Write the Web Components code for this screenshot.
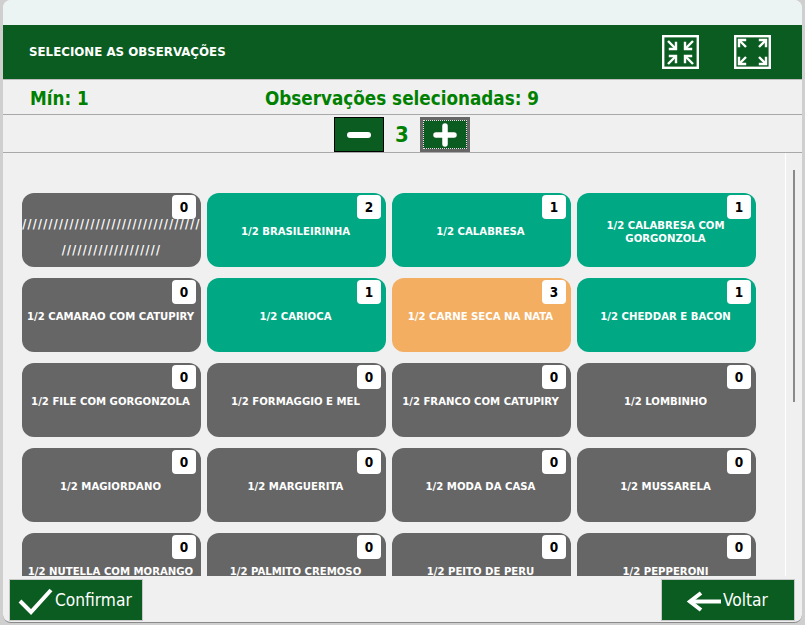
<!DOCTYPE html>
<html lang="pt"><head><meta charset="utf-8"><title>Observações</title>
<style>
html,body{margin:0;height:625px;overflow:hidden;background:#cfcfcf;font-family:"DejaVu Sans",sans-serif;font-stretch:condensed}
</style></head><body>
<obs-window>
  <obs-header slot="header" title-text="SELECIONE AS OBSERVAÇÕES"></obs-header>
  <obs-status slot="status" min="1" selected="9"></obs-status>
  <obs-stepper slot="stepper" value="3"></obs-stepper>
  <obs-scroll slot="body">
    <obs-card count="0" state="off"><span class="slashes"></span></obs-card>
    <obs-card count="2" state="on">1/2 BRASILEIRINHA</obs-card>
    <obs-card count="1" state="on">1/2 CALABRESA</obs-card>
    <obs-card count="1" state="on">1/2 CALABRESA COM GORGONZOLA</obs-card>
    <obs-card count="0" state="off">1/2 CAMARAO COM CATUPIRY</obs-card>
    <obs-card count="1" state="on">1/2 CARIOCA</obs-card>
    <obs-card count="3" state="max">1/2 CARNE SECA NA NATA</obs-card>
    <obs-card count="1" state="on">1/2 CHEDDAR E BACON</obs-card>
    <obs-card count="0" state="off">1/2 FILE COM GORGONZOLA</obs-card>
    <obs-card count="0" state="off">1/2 FORMAGGIO E MEL</obs-card>
    <obs-card count="0" state="off">1/2 FRANCO COM CATUPIRY</obs-card>
    <obs-card count="0" state="off">1/2 LOMBINHO</obs-card>
    <obs-card count="0" state="off">1/2 MAGIORDANO</obs-card>
    <obs-card count="0" state="off">1/2 MARGUERITA</obs-card>
    <obs-card count="0" state="off">1/2 MODA DA CASA</obs-card>
    <obs-card count="0" state="off">1/2 MUSSARELA</obs-card>
    <obs-card count="0" state="off">1/2 NUTELLA COM MORANGO</obs-card>
    <obs-card count="0" state="off">1/2 PALMITO CREMOSO</obs-card>
    <obs-card count="0" state="off">1/2 PEITO DE PERU</obs-card>
    <obs-card count="0" state="off">1/2 PEPPERONI</obs-card>
  </obs-scroll>
  <obs-action slot="left" kind="ok">Confirmar</obs-action>
  <obs-action slot="right" kind="back">Voltar</obs-action>
</obs-window>
<script>
const def=(name,css,html,init)=>customElements.define(name,class extends HTMLElement{
  connectedCallback(){
    if(this.shadowRoot)return;
    const r=this.attachShadow({mode:'open'});
    r.innerHTML='<style>'+css+'</style>'+(typeof html==='function'?html(this):html);
    if(init)init(this,r);
  }
});
const fontStack='"DejaVu Sans",sans-serif';
def('obs-window',`
:host{display:flex;flex-direction:column;box-sizing:border-box;height:623px;margin:0 3px 0 3px;background:#f0f0f0;border-radius:8px;border-bottom:1px solid #8a8a8a;overflow:hidden;font-family:${fontStack};font-stretch:condensed}
.cap{height:25px;flex:none;background:#ecf4f3}
.foot{flex:1;display:flex;justify-content:space-between;align-items:flex-start;padding:3px 7px 0 6px}
`,`<div class="cap"></div><slot name="header"></slot><slot name="status"></slot><slot name="stepper"></slot><slot name="body"></slot><div class="foot"><slot name="left"></slot><slot name="right"></slot></div>`);

const arrow=(x1,y1,x2,y2,hx,hy)=>`<path d="M${x1} ${y1}L${x2} ${y2}"/><path d="M${x2+hx*6} ${y2}H${x2}V${y2+hy*6}" stroke-linecap="square"/>`;
def('obs-header',`
:host{display:flex;align-items:center;height:54px;flex:none;background:#0a5c20;color:#fff;border-bottom:1px solid #bdbdbd;box-sizing:content-box}
.t{flex:1;padding:0 0 2px 26px;font-weight:700;font-size:13.15px}
.btns{display:flex;gap:35px;padding-right:31px}
svg{display:block;width:37px;height:34px}
`,h=>`<div class="t">${h.getAttribute('title-text')}</div><div class="btns">
<svg viewBox="0 0 37 34" fill="none" stroke="#fff" stroke-width="2.4"><rect x="1.2" y="1.2" width="34.6" height="31.6"/>
<g>${arrow(6,6,14,14,-1,-1)}${arrow(31,6,23,14,1,-1)}${arrow(6,29,14,21,-1,1)}${arrow(31,29,23,21,1,1)}</g></svg>
<svg viewBox="0 0 37 34" fill="none" stroke="#fff" stroke-width="2.4"><rect x="1.2" y="1.2" width="34.6" height="31.6"/>
<g>${arrow(12,12,5,5,1,1)}${arrow(25,12,32,5,-1,1)}${arrow(12,22,5,29,1,-1)}${arrow(25,22,32,29,-1,-1)}</g></svg>
</div>`);

def('obs-status',`
:host{display:flex;align-items:center;box-sizing:border-box;height:35px;padding-top:2px;flex:none;color:#008000;font-weight:700;font-size:18.7px;border-bottom:1px solid #a8a8a8}
.a{width:235px;padding-left:27px;flex:none;box-sizing:content-box}
`,h=>`<div class="a">Mín: ${h.getAttribute('min')}</div><div>Observações selecionadas: ${h.getAttribute('selected')}</div>`);

def('obs-stepper',`
:host{display:flex;align-items:flex-end;justify-content:center;height:37px;flex:none;border-bottom:1px solid #a8a8a8;padding-right:1px;box-sizing:content-box}
.v{width:36px;text-align:center;color:#008000;font-weight:700;font-size:22px;align-self:center;padding-top:2px}
.b{box-sizing:border-box;width:50px;height:35px;background:#0a5c20;border:1px solid #000;display:flex;align-items:center;justify-content:center;position:relative}
.b.f{border:3px solid #666}
.b.f::after{content:"";position:absolute;inset:0;border:1px dotted #fbd8f0}
svg{width:24px;height:24px;display:block}
`,h=>`<div class="b"><svg viewBox="0 0 24 24"><path d="M3 12H21" stroke="#fff" stroke-width="6" stroke-linecap="round"/></svg></div>
<div class="v">${h.getAttribute('value')}</div>
<div class="b f"><svg viewBox="0 0 24 24"><path d="M3 12H21M12 3V21" stroke="#fff" stroke-width="5.5" stroke-linecap="round"/></svg></div>`);

def('obs-scroll',`
:host{display:block;height:423px;flex:none;position:relative;overflow:hidden}
.g{display:grid;grid-template-columns:repeat(4,179px);column-gap:6px;row-gap:11px;padding:40px 0 0 19px}
.track{position:absolute;top:0;bottom:0;right:16px;width:1px;background:#fff}
.thumb{position:absolute;top:17px;right:7px;width:2px;height:232px;background:#8a8a8a}
`,`<div class="g"><slot></slot></div><div class="track"></div><div class="thumb"></div>`);

def('obs-card',`
:host{display:flex;align-items:center;justify-content:center;position:relative;height:74px;box-sizing:border-box;border-radius:12px;color:#fff;font-weight:700;font-size:11.25px;line-height:13px;text-align:center;padding:0 5px 0 3px;overflow:hidden;background:#666}
:host([state=on]){background:#00a884}
:host([state=max]){background:#f3ae62}
.n{position:absolute;top:2px;right:5px;width:24px;height:24px;border-radius:4px;background:#fff;color:#000;font-size:13.5px;line-height:24px;text-align:center}
.l{display:block;margin-top:3px}
.s{display:block;margin:14px -5px 0 -3px;line-height:26px;white-space:nowrap;font-size:12px;letter-spacing:1.3px}
`,h=>{
  const sl=h.querySelector('.slashes');
  const label=sl?`<span class="s">${'/'.repeat(34)}<br>${'/'.repeat(19)}</span>`:'<span class="l"><slot></slot></span>';
  return `${label}<span class="n">${h.getAttribute('count')}</span>`;
});

def('obs-action',`
:host{display:flex;align-items:center;box-sizing:border-box;width:134px;height:42px;background:#0a5c20;color:#fff;font-size:17.2px;border:1px solid #c8c8c8;position:relative}
:host([kind=ok]){padding-left:45px}
:host([kind=back]){padding-left:61px}
svg{position:absolute;left:1px;top:1px;width:132px;height:41px}
`,h=>{
  const ok=h.getAttribute('kind')==='ok';
  return `<svg viewBox="0 0 132 41" fill="none" stroke="#fff" stroke-width="4">${ok?'<path d="M9 20L20 31L40 9"/>':'<path d="M27 20.5H58"/><path d="M38 12L27 20.5L38 29" stroke-width="4"/>'}</svg><slot></slot>`;
});
</script>
</body></html>
